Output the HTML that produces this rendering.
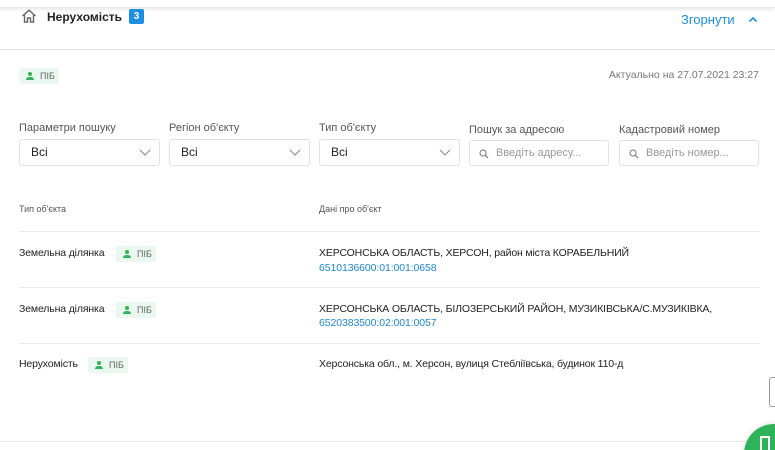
<!DOCTYPE html>
<html><head><meta charset="utf-8"><style>
*{margin:0;padding:0;box-sizing:border-box}
html{width:775px;height:450px;overflow:hidden}
body{width:775px;height:450px;overflow:hidden;background:#fff;font-family:"Liberation Sans",Arial,sans-serif;color:#222;position:relative}
.a{position:absolute;white-space:nowrap}
.tag{position:absolute;background:#e9f7ee;border-radius:3px;height:16px;font-size:9px;color:#666;line-height:16px;padding-left:21px;width:40px}
.tag:before{content:"";position:absolute;left:9px;top:4px;width:4px;height:4px;border-radius:50%;background:#2fb35a}
.tag:after{content:"";position:absolute;left:7px;top:9px;width:8px;height:3px;border-radius:3px 3px 0 0;background:#2fb35a}
.lbl{font-size:11px;color:#555;top:122px}
.sel{position:absolute;top:139px;width:141px;height:27px;border:1px solid #e2e2e2;border-radius:3px;font-size:12px;line-height:25px;padding-left:11px;color:#222}
.sel svg{position:absolute;right:8px;top:9px}
.inp{color:#999;padding-left:26px;font-size:11px}
.inp svg{left:9px;top:8px;right:auto}
.line{position:absolute;left:19px;width:741px;height:1px;background:#ececec}
.t{font-size:10.5px;color:#222;letter-spacing:-0.15px}
.lnk{font-size:10.5px;color:#1e88d2;letter-spacing:-0.1px}
</style></head><body>
<div class="a" style="left:0;top:0;width:775px;height:7px;box-shadow:0 2px 4px rgba(0,0,0,.12)"></div>
<svg class="a" style="left:21px;top:9px" width="16" height="14" viewBox="0 0 16 14"><path d="M1.5 7 L8 1.2 L14.5 7 M3.5 5.5 V13 H6.5 V9 H9.5 V13 H12.5 V5.5" fill="none" stroke="#666" stroke-width="1.4"/></svg>
<div class="a" style="left:47px;top:10px;font-size:12px;font-weight:bold;color:#222">Нерухомість</div>
<div class="a" style="left:129px;top:9px;width:15px;height:15px;background:#1e8fe0;border-radius:2px;color:#fff;font-size:10px;font-weight:bold;text-align:center;line-height:15px">3</div>
<div class="a" style="left:681px;top:12px;font-size:13px;color:#1e8fe0">Згорнути</div>
<svg class="a" style="left:748px;top:16px" width="10" height="7" viewBox="0 0 10 7"><path d="M1.5 5.5 L5 2 L8.5 5.5" fill="none" stroke="#1e8fe0" stroke-width="1.6"/></svg>
<div class="a" style="left:0;top:49px;width:775px;height:1px;background:#e6e6e6"></div>
<div class="tag" style="left:19px;top:68px">ПІБ</div>
<div class="a" style="right:16px;top:69px;font-size:10.5px;color:#777">Актуально на 27.07.2021 23:27</div>
<div class="a lbl" style="left:19px">Параметри пошуку</div>
<div class="a lbl" style="left:169px">Регіон об'єкту</div>
<div class="a lbl" style="left:319px">Тип об'єкту</div>
<div class="a lbl" style="left:469px;top:124px">Пошук за адресою</div>
<div class="a lbl" style="left:619px;top:124px">Кадастровий номер</div>
<div class="sel" style="left:19px">Всі<svg width="12" height="7" viewBox="0 0 12 7"><path d="M1 1 L6 6 L11 1" fill="none" stroke="#888" stroke-width="1"/></svg></div>
<div class="sel" style="left:169px">Всі<svg width="12" height="7" viewBox="0 0 12 7"><path d="M1 1 L6 6 L11 1" fill="none" stroke="#888" stroke-width="1"/></svg></div>
<div class="sel" style="left:319px">Всі<svg width="12" height="7" viewBox="0 0 12 7"><path d="M1 1 L6 6 L11 1" fill="none" stroke="#888" stroke-width="1"/></svg></div>
<div class="sel inp" style="left:469px;top:140px;width:140px;height:26px">Введіть адресу...<svg width="10" height="10" viewBox="0 0 10 10"><circle cx="4" cy="4" r="3" fill="none" stroke="#888" stroke-width="1.2"/><path d="M6.3 6.3 L9 9" stroke="#888" stroke-width="1.3"/></svg></div>
<div class="sel inp" style="left:619px;top:140px;width:140px;height:26px">Введіть номер...<svg width="10" height="10" viewBox="0 0 10 10"><circle cx="4" cy="4" r="3" fill="none" stroke="#888" stroke-width="1.2"/><path d="M6.3 6.3 L9 9" stroke="#888" stroke-width="1.3"/></svg></div>
<div class="a" style="left:19px;top:204px;font-size:9px;color:#555">Тип об'єкта</div>
<div class="a" style="left:319px;top:204px;font-size:9px;color:#555">Дані про об'єкт</div>
<div class="line" style="top:231px"></div>
<div class="line" style="top:287px"></div>
<div class="line" style="top:343px"></div>
<div class="a t" style="left:19px;top:247px">Земельна ділянка</div>
<div class="tag" style="left:116px;top:246px">ПІБ</div>
<div class="a t" style="left:319px;top:247px">ХЕРСОНСЬКА ОБЛАСТЬ, ХЕРСОН, район міста КОРАБЕЛЬНИЙ</div>
<div class="a lnk" style="left:319px;top:262px">6510136600:01:001:0658</div>
<div class="a t" style="left:19px;top:303px">Земельна ділянка</div>
<div class="tag" style="left:116px;top:302px">ПІБ</div>
<div class="a t" style="left:319px;top:303px">ХЕРСОНСЬКА ОБЛАСТЬ, БІЛОЗЕРСЬКИЙ РАЙОН, МУЗИКІВСЬКА/С.МУЗИКІВКА,</div>
<div class="a lnk" style="left:319px;top:317px">6520383500:02:001:0057</div>
<div class="a t" style="left:19px;top:358px">Нерухомість</div>
<div class="tag" style="left:88px;top:357px">ПІБ</div>
<div class="a t" style="left:319px;top:358px">Херсонська обл., м. Херсон, вулиця Стеблiївська, будинок 110-д</div>
<div class="a" style="left:0;top:441px;width:775px;height:1px;background:#e8e8f0"></div>
<div class="a" style="left:769px;top:377px;width:6px;height:30px;border:1px solid #999;border-right:none;border-radius:3px 0 0 3px;background:#fff"></div>
<div class="a" style="left:736px;top:416px;width:39px;height:34px;overflow:hidden">
<div class="a" style="left:8px;top:8px;width:60px;height:60px;border-radius:50%;background:#2fb35a;box-shadow:0 0 6px rgba(0,0,0,.15)"></div>
<div class="a" style="left:24px;top:20px;width:10px;height:14px;border:2px solid #fff;border-bottom:none"></div>
</div>
</body></html>
